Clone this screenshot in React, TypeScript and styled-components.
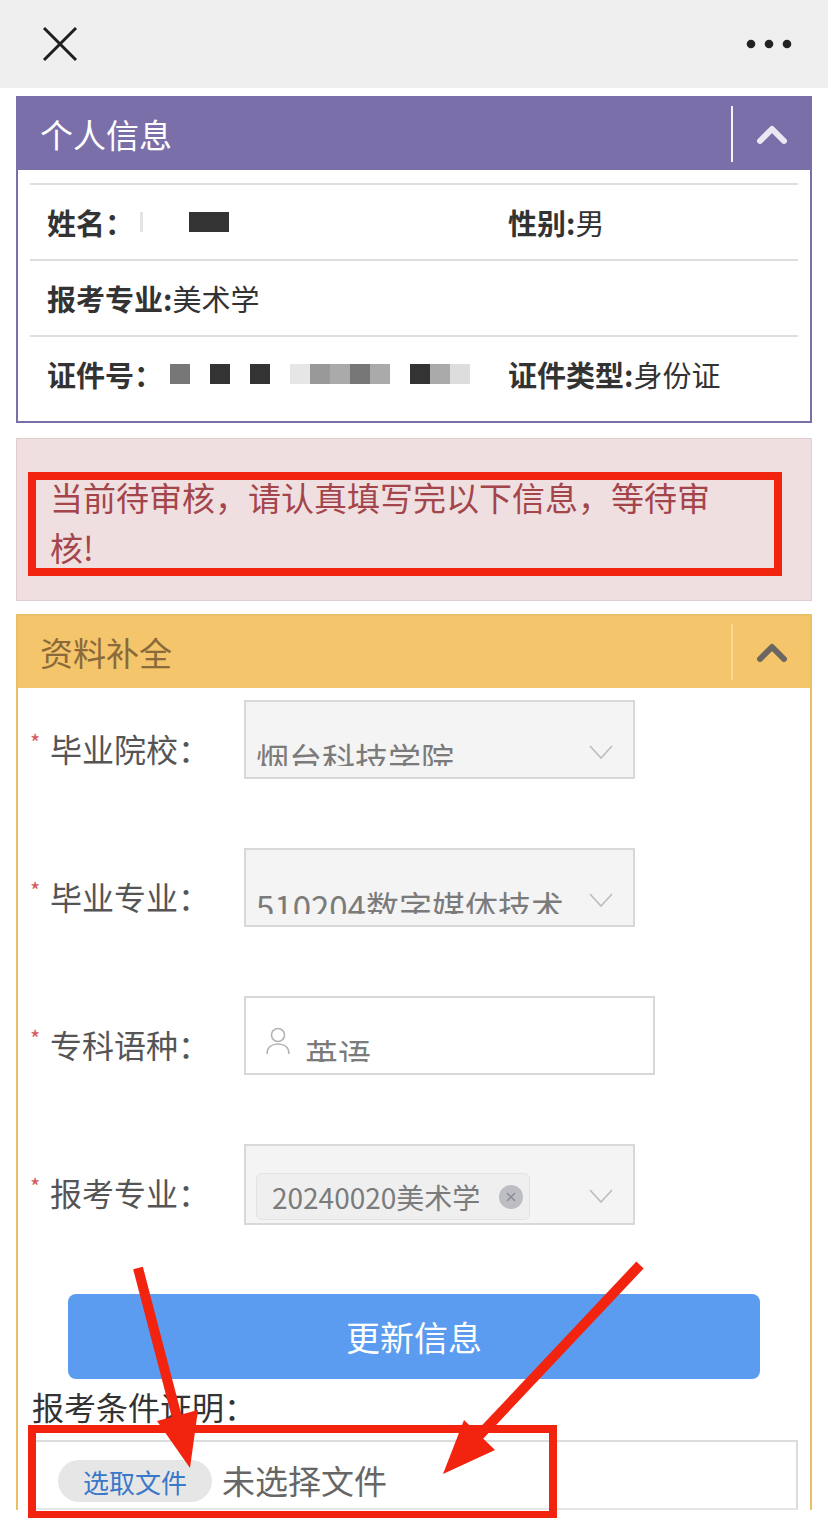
import React from "react";
import styled, { createGlobalStyle } from "styled-components";

const GlobalStyle = createGlobalStyle`
  html, body { margin: 0; padding: 0; background: #ffffff; }
  body { font-family: "Noto Sans CJK SC", "Noto Sans", sans-serif; }
  * { box-sizing: border-box; }
`;

const Page = styled.div`
  position: relative;
  width: 828px;
  height: 1518px;
  overflow: hidden;
  background: #ffffff;
`;

const TopBar = styled.div`
  height: 88px;
  background: #efefef;
  display: flex;
  align-items: center;
  justify-content: space-between;
  padding: 0 36px 0 41px;
`;

const Main = styled.div`
  padding: 8px 16px 0;
`;

type Tone = { border: string; head: string; title: string; line: string; chevron: string };

const purple: Tone = { border: "#7b6fa9", head: "#7b6fa9", title: "#ffffff", line: "#f4f2fa", chevron: "#ebe8f3" };
const yellow: Tone = { border: "#e9c066", head: "#f5c56b", title: "#8a6a3a", line: "#fbdb94", chevron: "#6b6661" };

const Panel = styled.section<{ $tone: Tone }>`
  border: 2px solid ${(p) => p.$tone.border};
  border-bottom-width: ${(p) => (p.$tone === yellow ? "0" : "2px")};
  background: #ffffff;
`;

const PanelHeader = styled.div<{ $tone: Tone }>`
  height: 72px;
  background: ${(p) => p.$tone.head};
  display: flex;
  align-items: center;
  padding-left: 22px;
`;

const PanelTitle = styled.h2<{ $tone: Tone }>`
  flex: 1;
  margin: 0;
  font-size: 33px;
  font-weight: 400;
  line-height: 1;
  color: ${(p) => p.$tone.title};
`;

const ToggleZone = styled.div<{ $tone: Tone }>`
  width: 79px;
  height: 56px;
  border-left: 2px solid ${(p) => p.$tone.line};
  display: flex;
  align-items: center;
  justify-content: center;
`;

const InfoBody = styled.div`
  padding: 13px 12px 10px;
`;

const InfoRow = styled.div`
  height: 76px;
  border-top: 2px solid #dedede;
  display: grid;
  grid-template-columns: 461px 1fr;
  align-items: center;
  padding-left: 17px;
  font-size: 29px;
  color: #333;
`;

const InfoCell = styled.div`
  display: flex;
  align-items: center;
  white-space: nowrap;
`;

const InfoLabel = styled.span`
  font-weight: 700;
`;

const Pixel = styled.span<{ $shade: string; $w?: number; $gap?: number }>`
  display: inline-block;
  width: ${(p) => p.$w ?? 20}px;
  height: 20px;
  margin-left: ${(p) => p.$gap ?? 0}px;
  background: ${(p) => p.$shade};
`;

const Alert = styled.div`
  position: relative;
  margin-top: 15px;
  height: 163px;
  background: #efdfe0;
  border: 1px solid #e2cdce;
  padding: 33px 80px 0 33px;
  color: #a3454b;
  font-size: 33px;
  line-height: 50px;
`;

const SecondPanel = styled(Panel)`
  margin-top: 13px;
`;

const FormBody = styled.div`
  padding: 12px 12px 0 12px;
`;

const FormRow = styled.div`
  display: grid;
  grid-template-columns: 214px auto;
  align-items: start;
  margin-bottom: 69px;
`;

const FieldLabel = styled.label`
  padding-top: 26px;
  font-size: 32px;
  line-height: 44px;
  color: #555;
  display: flex;
  align-items: flex-start;
  white-space: nowrap;
`;

const Star = styled.span`
  width: 20px;
  font-size: 22px;
  line-height: 30px;
  color: #d0585c;
`;

const SelectBox = styled.div<{ $h?: number; $pb?: number; $white?: boolean; $w?: number }>`
  width: ${(p) => p.$w ?? 391}px;
  height: ${(p) => p.$h ?? 79}px;
  border: 2px solid #d8d8d8;
  background: ${(p) => (p.$white ? "#ffffff" : "#f4f4f4")};
  display: flex;
  align-items: flex-end;
  padding: 0 20px ${(p) => p.$pb ?? 11}px 10px;
`;

const ClipText = styled.div`
  flex: 1;
  font-size: 33px;
  line-height: 33px;
  height: 24px;
  overflow: hidden;
  white-space: nowrap;
  color: #7b7b7b;
`;

const Chevron = styled.svg<{ $mb?: number }>`
  flex: none;
  margin-bottom: ${(p) => p.$mb ?? 6}px;
`;

const IconSlot = styled.svg`
  flex: none;
  margin: 0 14px 7px 9px;
`;

const Tag = styled.div`
  width: 274px;
  height: 47px;
  border: 1px solid #e3e3e3;
  border-radius: 6px;
  background: #efefef;
  display: flex;
  align-items: center;
  justify-content: space-between;
  padding: 0 6px 0 15px;
  font-size: 28px;
  color: #7b7b7b;
  margin-right: auto;
`;

const TagClose = styled.span`
  width: 24px;
  height: 24px;
  border-radius: 50%;
  background: #bdbdc4;
  display: flex;
  align-items: center;
  justify-content: center;
`;

const PrimaryButton = styled.button`
  display: flex;
  width: calc(100% - 76px);
  margin: 0 38px;
  height: 85px;
  border: none;
  border-radius: 8px;
  background: #5b9cf0;
  color: #ffffff;
  font-family: inherit;
  font-size: 34px;
  align-items: center;
  justify-content: center;
`;

const ProofLabel = styled.div`
  margin-top: 5px;
  padding-left: 2px;
  font-size: 32px;
  line-height: 44px;
  color: #333;
`;

const FileBox = styled.div`
  margin-top: 12px;
  height: 70px;
  border: 2px solid #dcdcdc;
  border-bottom-color: #e6e6e6;
  display: flex;
  align-items: flex-end;
  padding: 0 0 6px 26px;
  gap: 10px;
  background: #ffffff;
`;

const FileButton = styled.span`
  width: 154px;
  height: 42px;
  border-radius: 21px;
  background: #e6e6e6;
  color: #3a78c9;
  font-size: 26px;
  display: flex;
  align-items: center;
  justify-content: center;
`;

const FileHint = styled.span`
  font-size: 33px;
  line-height: 44px;
  color: #666;
`;

const Overlay = styled.svg`
  position: absolute;
  left: 0;
  top: 0;
  pointer-events: none;
`;

const ChevronUp = ({ color }: { color: string }) => (
  <svg width="34" height="24" viewBox="0 0 34 24">
    <polyline points="5,19 17,7 29,19" fill="none" stroke={color} strokeWidth="6" strokeLinecap="round" strokeLinejoin="round" />
  </svg>
);

const ChevronDown = ({ mb }: { mb?: number }) => (
  <Chevron $mb={mb} width="24" height="15" viewBox="0 0 24 15">
    <polyline points="1,1 12,13 23,1" fill="none" stroke="#bdbdbd" strokeWidth="1.6" />
  </Chevron>
);

export default function App() {
  return (
    <Page>
      <GlobalStyle />
      <TopBar>
        <svg width="38" height="38" viewBox="0 0 38 38">
          <line x1="3" y1="3" x2="35" y2="35" stroke="#1d1d1d" strokeWidth="3" />
          <line x1="35" y1="3" x2="3" y2="35" stroke="#1d1d1d" strokeWidth="3" />
        </svg>
        <svg width="46" height="10" viewBox="0 0 46 10">
          <circle cx="5" cy="5" r="4.3" fill="#222" />
          <circle cx="23" cy="5" r="4.3" fill="#222" />
          <circle cx="41" cy="5" r="4.3" fill="#222" />
        </svg>
      </TopBar>
      <Main>
        <Panel $tone={purple}>
          <PanelHeader $tone={purple}>
            <PanelTitle $tone={purple}>个人信息</PanelTitle>
            <ToggleZone $tone={purple}>
              <ChevronUp color={purple.chevron} />
            </ToggleZone>
          </PanelHeader>
          <InfoBody>
            <InfoRow>
              <InfoCell>
                <InfoLabel>姓名：</InfoLabel>
                <Pixel $shade="#e4e4e4" $w={3} $gap={6} />
                <Pixel $shade="#333" $w={40} $gap={46} />
              </InfoCell>
              <InfoCell>
                <InfoLabel>性别:</InfoLabel>男
              </InfoCell>
            </InfoRow>
            <InfoRow>
              <InfoCell>
                <InfoLabel>报考专业:</InfoLabel>美术学
              </InfoCell>
              <InfoCell />
            </InfoRow>
            <InfoRow>
              <InfoCell>
                <InfoLabel>证件号：</InfoLabel>
                <Pixel $shade="#777" $gap={7} />
                <Pixel $shade="#333" $gap={20} />
                <Pixel $shade="#333" $gap={20} />
                <Pixel $shade="#e6e6e6" $gap={20} />
                <Pixel $shade="#999" />
                <Pixel $shade="#aaa" />
                <Pixel $shade="#777" />
                <Pixel $shade="#aaa" />
                <Pixel $shade="#333" $gap={20} />
                <Pixel $shade="#aaa" />
                <Pixel $shade="#ddd" />
              </InfoCell>
              <InfoCell>
                <InfoLabel>证件类型:</InfoLabel>身份证
              </InfoCell>
            </InfoRow>
          </InfoBody>
        </Panel>

        <Alert>当前待审核，请认真填写完以下信息，等待审核!</Alert>

        <SecondPanel $tone={yellow}>
          <PanelHeader $tone={yellow}>
            <PanelTitle $tone={yellow}>资料补全</PanelTitle>
            <ToggleZone $tone={yellow}>
              <ChevronUp color={yellow.chevron} />
            </ToggleZone>
          </PanelHeader>
          <FormBody>
            <FormRow>
              <FieldLabel>
                <Star>*</Star>毕业院校：
              </FieldLabel>
              <SelectBox>
                <ClipText>烟台科技学院</ClipText>
                <ChevronDown />
              </SelectBox>
            </FormRow>
            <FormRow>
              <FieldLabel>
                <Star>*</Star>毕业专业：
              </FieldLabel>
              <SelectBox>
                <ClipText>510204数字媒体技术</ClipText>
                <ChevronDown />
              </SelectBox>
            </FormRow>
            <FormRow>
              <FieldLabel>
                <Star>*</Star>专科语种：
              </FieldLabel>
              <SelectBox $white $w={411}>
                <IconSlot width="26" height="28" viewBox="0 0 26 28">
                  <circle cx="13" cy="8" r="6.5" fill="none" stroke="#b3b3b3" strokeWidth="1.6" />
                  <path d="M2 27 C2 20 7 17 13 17 C19 17 24 20 24 27" fill="none" stroke="#b3b3b3" strokeWidth="1.6" />
                </IconSlot>
                <ClipText>英语</ClipText>
              </SelectBox>
            </FormRow>
            <FormRow>
              <FieldLabel>
                <Star>*</Star>报考专业：
              </FieldLabel>
              <SelectBox $h={81} $pb={3}>
                <Tag>
                  <span>20240020美术学</span>
                  <TagClose>
                    <svg width="12" height="12" viewBox="0 0 12 12">
                      <line x1="2" y1="2" x2="10" y2="10" stroke="#8a8a8f" strokeWidth="1.4" />
                      <line x1="10" y1="2" x2="2" y2="10" stroke="#8a8a8f" strokeWidth="1.4" />
                    </svg>
                  </TagClose>
                </Tag>
                <ChevronDown mb={16} />
              </SelectBox>
            </FormRow>
            <PrimaryButton type="button">更新信息</PrimaryButton>
            <ProofLabel>报考条件证明：</ProofLabel>
            <FileBox>
              <FileButton>选取文件</FileButton>
              <FileHint>未选择文件</FileHint>
            </FileBox>
          </FormBody>
        </SecondPanel>
      </Main>

      <Overlay width="828" height="1518" viewBox="0 0 828 1518">
        <rect x="32" y="476" width="746" height="96" fill="none" stroke="#f2230f" strokeWidth="8" />
        <rect x="32" y="1429" width="521" height="86" fill="none" stroke="#f2230f" strokeWidth="8" />
        <line x1="138" y1="1268" x2="179" y2="1425" stroke="#f2230f" strokeWidth="10" />
        <polygon points="190,1468 198,1410 157,1421" fill="#f2230f" />
        <line x1="640" y1="1265" x2="476" y2="1439" stroke="#f2230f" strokeWidth="10" />
        <polygon points="443,1474 495,1450 464,1420" fill="#f2230f" />
      </Overlay>
    </Page>
  );
}
